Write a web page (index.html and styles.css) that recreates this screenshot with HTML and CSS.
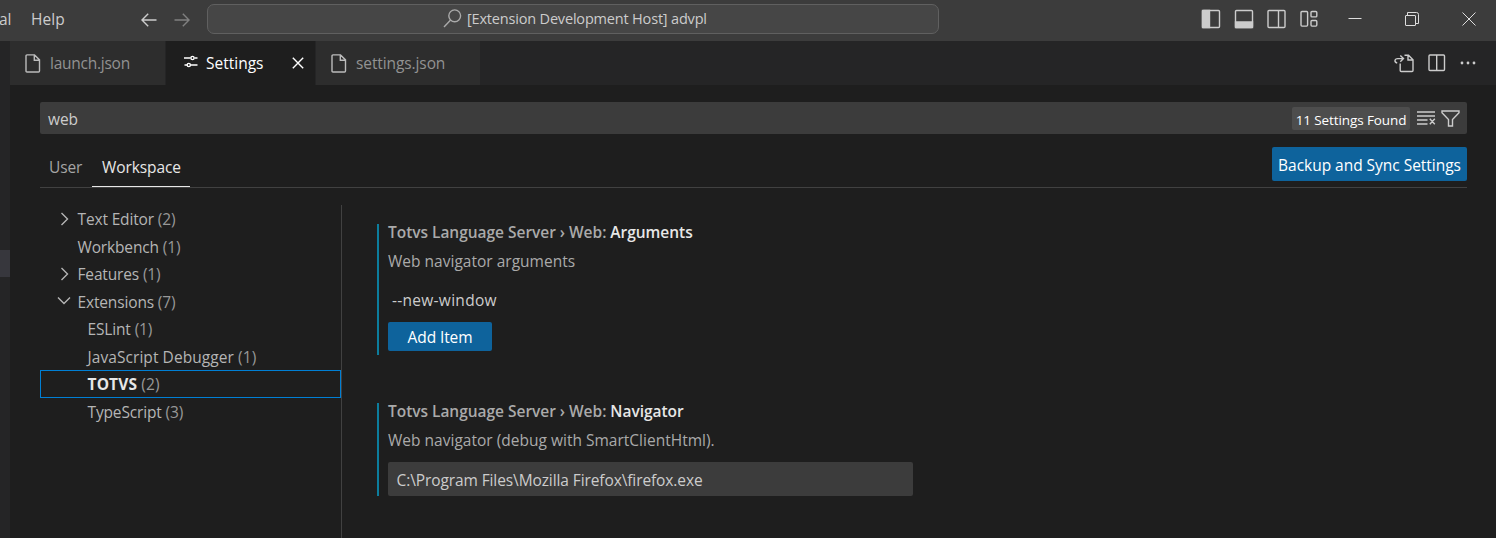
FILE: index.html
```html
<!DOCTYPE html>
<html lang="en">
<head>
<meta charset="utf-8">
<title>Settings</title>
<link rel="stylesheet" href="styles.css">
</head>
<body>
<header class="titlebar">
  <nav class="menu"><span class="menu-cut">al</span><span class="menu-help">Help</span></nav>
  <div class="history">
    <svg width="16" height="16" viewBox="0 0 16 16" class="stroke"><path d="M15.5 8H1M7.2 1.8 1 8l6.2 6.2"/></svg>
    <svg width="16" height="16" viewBox="0 0 16 16" class="stroke dim"><path d="M.5 8H15M8.8 1.8 15 8l-6.2 6.2"/></svg>
  </div>
  <div class="command">
    <svg width="19" height="19" viewBox="0 0 19 19" class="stroke search"><circle cx="11.7" cy="6.8" r="5.9"/><path d="M7.6 11 1 18"/></svg>
    <span class="command-text">[Extension Development Host] advpl</span>
  </div>
  <div class="layout">
    <svg width="20" height="20" viewBox="0 0 20 20" class="stroke"><rect x="1.5" y="1.5" width="17" height="17" rx="1"/><path class="fill" d="M1.500 1.500h7v17h-7z"/></svg>
    <svg width="20" height="20" viewBox="0 0 20 20" class="stroke"><rect x="1.5" y="1.5" width="17" height="17" rx="1"/><path class="fill" d="M1.500 13h17v5.500h-17z"/></svg>
    <svg width="20" height="20" viewBox="0 0 20 20" class="stroke"><rect x="1" y="1.5" width="17" height="17" rx="1"/><path d="M11.5 1.500v17"/></svg>
    <svg width="20" height="20" viewBox="0 0 20 20" class="stroke"><rect x="1" y="2.500" width="6.600" height="14.600" rx="1"/><rect x="11" y="2.500" width="5.800" height="5.400" rx="1"/><rect x="11" y="11.500" width="5.800" height="5.600" rx="1"/></svg>
  </div>
  <div class="window">
    <svg width="14" height="14" viewBox="0 0 14 14" class="hair"><path d="M.5 6.5h13"/></svg>
    <svg width="14" height="14" viewBox="0 0 14 14" class="hair"><rect x=".5" y="3.5" width="10" height="10" rx=".5"/><path d="M2.5 3V.5h9q2 0 2 2V11.500H11"/></svg>
    <svg width="14" height="14" viewBox="0 0 14 14" class="hair"><path d="m.5.5 13 13m0-13-13 13"/></svg>
  </div>
</header>
<div class="workbench">
  <aside class="sidebar"><div class="sidebar-row"></div></aside>
  <main class="editor">
    <div class="tabs">
      <div class="tab tab-launch">
        <svg width="16" height="19" viewBox="0 0 16 19" class="stroke"><path d="M2 .9h7.500l5 5V17q0 1-1 1H2q-1 0-1-1V1.900q0-1 1-1zM9.300 1v5.200h5"/></svg>
        <span class="t-launch">launch.json</span>
      </div>
      <div class="tab tab-settings active">
        <svg width="14" height="14" viewBox="0 0 14 14" class="stroke sliders"><path d="M0 3h6.500M10.500 3H13.500M.5 10H3M6.500 10H13.500"/><circle cx="8.500" cy="3" r="1.600"/><circle cx="4.800" cy="10" r="1.600"/></svg>
        <span class="t-settings">Settings</span>
        <svg width="12" height="12" viewBox="0 0 12 12" class="stroke close"><path d="m.8.8 10.400 10.400m0-10.400L.8 11.200"/></svg>
      </div>
      <div class="tab tab-json">
        <svg width="16" height="19" viewBox="0 0 16 19" class="stroke"><path d="M2 .9h7.500l5 5V17q0 1-1 1H2q-1 0-1-1V1.900q0-1 1-1zM9.300 1v5.200h5"/></svg>
        <span>settings.json</span>
      </div>
      <div class="actions">
        <svg width="21" height="19" viewBox="0 0 21 19" class="stroke"><path d="M10.500 1.300h4l4.500 4.500v10.700q0 1-1 1H7.200q-1 0-1-1V9.500M14 1.500V6h5M3.200 9C0 8.200.3 4.600 3.800 4.600h5.500M6.300 1.400l3.200 3.200-3.200 3.200"/></svg>
        <svg width="18" height="18" viewBox="0 0 18 18" class="stroke"><rect x="1" y="1" width="15.500" height="15.500" rx="1"/><path d="M8.700 1v15.500"/></svg>
        <svg width="18" height="18" viewBox="0 0 18 18" class="dots"><circle cx="3" cy="9" r="1.400"/><circle cx="9" cy="9" r="1.400"/><circle cx="15" cy="9" r="1.400"/></svg>
      </div>
    </div>
    <section class="settings">
      <div class="searchbox">
        <span class="query">web</span>
        <span class="count">11 Settings Found</span>
        <svg width="20" height="16" viewBox="0 0 20 16" class="stroke clear"><path d="M1 2h18M1 6h18M1 10h10.500M1 14h10.500M13.800 8.800l5 5.400m0-5.400-5 5.400"/></svg>
        <svg width="19" height="17" viewBox="0 0 19 17" class="stroke"><path d="M1 1h17v1.800L11.500 9.500V16H7.500V9.500L1 2.800z"/></svg>
      </div>
      <div class="scope">
        <div class="scope-tab">User</div>
        <div class="scope-tab selected">Workspace</div>
        <button class="sync">Backup and Sync Settings</button>
      </div>
      <div class="body">
        <ul class="toc">
          <li><svg width="10" height="14" viewBox="0 0 10 14" class="stroke"><path d="m1.500 1 6 6-6 6"/></svg><span>Text Editor <i>(2)</i></span></li>
          <li><span>Workbench <i>(1)</i></span></li>
          <li><svg width="10" height="14" viewBox="0 0 10 14" class="stroke"><path d="m1.500 1 6 6-6 6"/></svg><span>Features <i>(1)</i></span></li>
          <li><svg width="14" height="10" viewBox="0 0 14 10" class="stroke down"><path d="m1 1.500 6 6 6-6"/></svg><span>Extensions <i>(7)</i></span></li>
          <li class="child"><span>ESLint <i>(1)</i></span></li>
          <li class="child wide"><span>JavaScript Debugger <i>(1)</i></span></li>
          <li class="child current"><span><b>TOTVS</b> <i>(2)</i></span></li>
          <li class="child"><span>TypeScript <i>(3)</i></span></li>
        </ul>
        <div class="list">
          <article class="item item-args">
            <h2><span class="category">Totvs Language Server › Web:</span> <span class="key">Arguments</span></h2>
            <p>Web navigator arguments</p>
            <div class="value">--new-window</div>
            <button class="add">Add Item</button>
          </article>
          <article class="item item-nav">
            <h2><span class="category">Totvs Language Server › Web:</span> <span class="key">Navigator</span></h2>
            <p>Web navigator (debug with SmartClientHtml).</p>
            <div class="field">C:\Program Files\Mozilla Firefox\firefox.exe</div>
          </article>
        </div>
      </div>
    </section>
  </main>
</div>
</body>
</html>
```
FILE: styles.css
```css
* { box-sizing: border-box; }
body {
  margin: 0;
  width: 1496px;
  height: 538px;
  overflow: hidden;
  display: flex;
  flex-direction: column;
  background: #1e1e1e;
  color: #ccc;
  font: 15.5px/22px "Open Sans", "Noto Sans", sans-serif;
  letter-spacing: -0.1px;
  white-space: nowrap;
}
svg { flex: none; display: block; }
.stroke { fill: none; stroke: currentColor; stroke-width: 1.4; }
.stroke .fill, .dots { fill: currentColor; }
.hair { fill: none; stroke: #ddd; stroke-width: 1; }
button { border: 0; padding: 2px 0 0; font: inherit; letter-spacing: inherit; color: #fff; background: #0e639c; border-radius: 2px; }

.titlebar { flex: none; height: 41px; display: flex; align-items: center; background: #3c3c3c; padding-bottom: 3px; }
.menu { display: flex; width: 141px; }
.menu-cut { width: 31px; text-indent: -1px; }
.menu-help { letter-spacing: 0.1px; }
.history { display: flex; gap: 17px; width: 66px; padding-top: 1px; }
.history .dim { color: #808080; }
.command { width: 732px; height: 30px; display: flex; align-items: center; gap: 5px; padding-left: 235px; border: 1px solid #606060; border-radius: 7px; background: #464646; }
.command .search { color: #aaa; margin-top: -2px; }
.command-text { font-size: 14.5px; letter-spacing: -0.18px; }
.layout { display: flex; gap: 13px; margin-left: 261.500px; }
.window { display: flex; gap: 43px; margin-left: 28.500px; }

.workbench { flex: 1; display: flex; min-height: 0; }
.sidebar { flex: none; width: 10px; background: #252526; padding-top: 209px; }
.sidebar-row { height: 27px; background: #37373d; }
.editor { flex: 1; display: flex; flex-direction: column; min-width: 0; }
.tabs { flex: none; height: 44px; display: flex; background: #252526; }
.tab { display: flex; align-items: center; background: #2d2d2d; color: #929292; border-right: 1px solid #252526; }
.tab svg { color: #bbb; }
.tab-launch { width: 156px; padding-left: 15px; gap: 9px; }
.t-launch { letter-spacing: -0.25px; }
.tab-settings { width: 150px; padding-left: 18px; gap: 8px; }
.t-settings { letter-spacing: 0; }
.sliders { margin-top: -2px; }
.tab-json { width: 165px; padding-left: 15px; gap: 9px; }
.tab.active { background: #1e1e1e; color: #fff; }
.tab.active svg { color: #fff; }
.tab .close { margin-left: auto; margin-right: 11.500px; }
.actions { display: flex; align-items: center; gap: 13px; margin-left: auto; margin-right: 19px; }

.settings { flex: 1; display: flex; flex-direction: column; min-height: 0; padding: 17px 29px 0 30px; }
.searchbox { flex: none; height: 32px; display: flex; align-items: center; padding: 0 7px 0 8px; background: #3c3c3c; border-radius: 2px; }
.query { padding-top: 2px; }
.count { height: 23px; width: 118px; margin-left: auto; padding-top: 2px; display: flex; justify-content: center; background: #4d4d4d; color: #fff; border-radius: 2px; font-size: 13.5px; margin-top: 1px; }
.clear { margin: 0 5px 0 6px; }
.scope { flex: none; height: 54px; display: flex; border-bottom: 1px solid #414141; }
.scope-tab { padding: 22px 9px 0; color: #a5a5a5; }
.scope-tab.selected { width: 98px; padding-left: 10px; color: #e7e7e7; border-bottom: 1px solid #e7e7e7; }
.scope-tab:first-child { width: 52px; }
.sync { width: 195px; height: 34px; margin: 13px 0 0 auto; letter-spacing: -0.03px; }

.body { flex: 1; display: flex; min-height: 0; padding-top: 17px; }
.toc { flex: none; width: 302px; margin: 0; padding: 0; list-style: none; border-right: 1px solid #414141; color: #b5b5b5; letter-spacing: -0.15px; }
.toc li { height: 27.5px; display: flex; align-items: center; padding-left: 36.5px; border: 1px solid transparent; }
.toc li span { padding-top: 1px; }
.toc li.child { padding-left: 46.5px; }
.toc li.wide { letter-spacing: 0.07px; }
.toc li svg { margin: 0 8px 0 -18px; }
.toc li svg.down { margin: 0 7px 0 -21px; }
.toc i { font-style: normal; color: #989898; }
.toc .current { border-color: #007fd4; letter-spacing: 0.15px; }
.toc b { color: #e7e7e7; }
.list { padding-left: 35px; }
.item { border-left: 2px solid #0c7d9d; padding-left: 9px; width: 540px; }
.item h2 { margin: 0; font-size: 15.5px; line-height: 17px; font-weight: 600; color: #aaa; letter-spacing: -0.03px; }
.key { color: #e7e7e7; }
.item p { margin: 9px 0 0; line-height: 22px; color: #aaa; letter-spacing: 0.01px; }
.item-args { height: 131px; margin-top: 19px; }
.value { margin-top: 17px; padding-left: 4px; letter-spacing: 0.28px; }
.add { display: block; width: 104px; height: 29px; margin-top: 11px; padding-top: 1px; }
.item-nav { height: 93px; margin-top: 48px; }
.field { width: 525px; height: 34px; margin-top: 11px; padding: 7px 8.5px; background: #3c3c3c; border-radius: 2px; }
```
